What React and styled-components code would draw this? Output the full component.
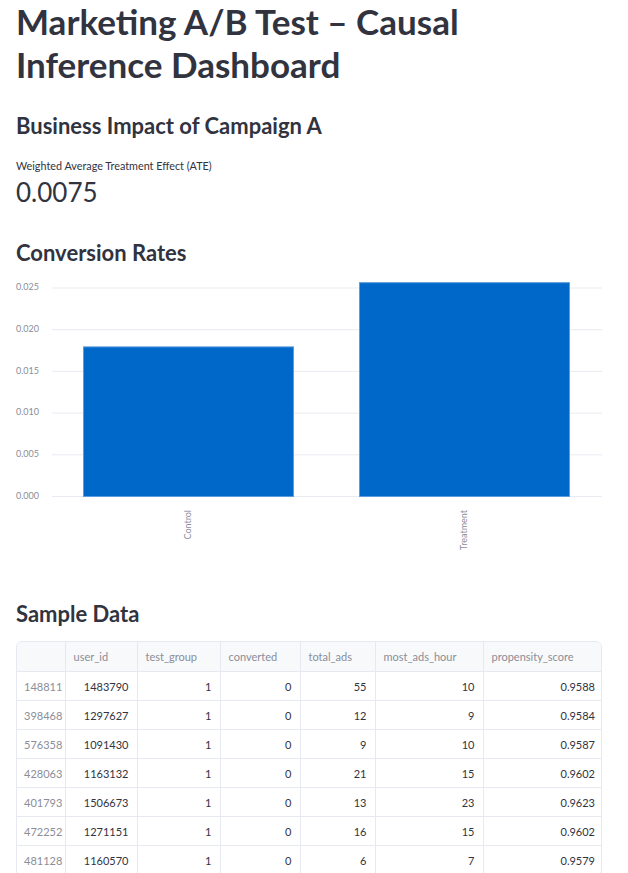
import React from "react";
import styled, { createGlobalStyle } from "styled-components";

const Global = createGlobalStyle`
  html, body { margin: 0; padding: 0; background: #ffffff; }
  body { font-family: Lato, "Noto Sans", sans-serif; color: #31333f; }
`;

const Page = styled.main`
  width: 586px;
  padding: 0 26px 40px 16px;
`;

const Title = styled.h1`
  margin: 0;
  max-width: 560px;
  font-size: 35px;
  line-height: 43px;
  font-weight: 700;
  color: #31333f;
`;

const SubHeading = styled.h3`
  margin: ${(p) => p.$top}px 0 0;
  font-size: 22px;
  line-height: 30px;
  font-weight: 700;
  color: #31333f;
`;

const MetricLabel = styled.div`
  margin-top: 17px;
  font-size: 10.8px;
  line-height: 16px;
  color: #31333f;
`;

const MetricValue = styled.div`
  font-size: 26px;
  line-height: 36px;
  font-weight: 400;
  color: #31333f;
`;

const ChartBox = styled.div`
  margin-top: 12px;
  height: 280px;
`;

const TableWrap = styled.div`
  margin-top: 12px;
  border: 1px solid #e6e9ef;
  border-radius: 6px;
  overflow: hidden;
`;

const Grid = styled.table`
  width: 100%;
  border-collapse: collapse;
  table-layout: fixed;
  font-size: 11px;
`;

const HeadCell = styled.th`
  height: 29px;
  padding: 0 8px;
  text-align: left;
  font-weight: 400;
  color: #8b8d98;
  background: #f8f9fb;
  border-left: 1px solid #e6e9ef;
  border-bottom: 1px solid #e6e9ef;
  &:first-child { border-left: none; }
`;

const Cell = styled.td`
  height: 28px;
  padding: 0 8px;
  text-align: ${(p) => (p.$index ? "left" : "right")};
  color: ${(p) => (p.$index ? "#8b8d98" : "#31333f")};
  border-left: 1px solid #e6e9ef;
  border-bottom: 1px solid #e6e9ef;
  &:first-child { border-left: none; padding-left: 7px; }
`;

const AxisText = styled.text`
  font-family: Lato, "Noto Sans", sans-serif;
  font-size: 9px;
  fill: #8b8d98;
`;

const ticks = [0.025, 0.02, 0.015, 0.01, 0.005, 0];
const zeroY = 216.5;
const perUnit = 41.7 / 0.005;

const bars = [
  { label: "Control", value: 0.018, x: 67, w: 211 },
  { label: "Treatment", value: 0.0257, x: 343, w: 211 },
];

function Chart() {
  return (
    <ChartBox>
      <svg width="586" height="280" viewBox="0 0 586 280">
        {ticks.map((t) => {
          const y = zeroY - t * perUnit;
          return (
            <g key={t}>
              <line x1="36" x2="586" y1={y} y2={y} stroke="#e8ebf2" strokeWidth="1" />
              <AxisText x="0" y={y} dominantBaseline="middle">
                {t.toFixed(3)}
              </AxisText>
            </g>
          );
        })}
        {bars.map((b) => {
          const top = zeroY - b.value * perUnit;
          return (
            <g key={b.label}>
              <rect
                x={b.x + 0.5}
                y={top + 0.5}
                width={b.w - 1}
                height={zeroY - top - 0.5}
                fill="#0068c9"
                stroke="#5c9ce0"
                strokeWidth="1"
              />
              <AxisText
                x={b.x + b.w / 2}
                y="230"
                textAnchor="end"
                dominantBaseline="middle"
                transform={`rotate(-90 ${b.x + b.w / 2} 230)`}
              >
                {b.label}
              </AxisText>
            </g>
          );
        })}
      </svg>
    </ChartBox>
  );
}

const columns = [
  { key: "idx", label: "", w: 48 },
  { key: "user_id", label: "user_id", w: 72 },
  { key: "test_group", label: "test_group", w: 83 },
  { key: "converted", label: "converted", w: 80 },
  { key: "total_ads", label: "total_ads", w: 75 },
  { key: "most_ads_hour", label: "most_ads_hour", w: 108 },
  { key: "propensity_score", label: "propensity_score", w: 120 },
];

const rows = [
  ["148811", "1483790", "1", "0", "55", "10", "0.9588"],
  ["398468", "1297627", "1", "0", "12", "9", "0.9584"],
  ["576358", "1091430", "1", "0", "9", "10", "0.9587"],
  ["428063", "1163132", "1", "0", "21", "15", "0.9602"],
  ["401793", "1506673", "1", "0", "13", "23", "0.9623"],
  ["472252", "1271151", "1", "0", "16", "15", "0.9602"],
  ["481128", "1160570", "1", "0", "6", "7", "0.9579"],
];

function DataTable() {
  return (
    <TableWrap>
      <Grid>
        <colgroup>
          {columns.map((c) => (
            <col key={c.key} style={{ width: c.w }} />
          ))}
        </colgroup>
        <thead>
          <tr>
            {columns.map((c) => (
              <HeadCell key={c.key}>{c.label}</HeadCell>
            ))}
          </tr>
        </thead>
        <tbody>
          {rows.map((r) => (
            <tr key={r[0]}>
              {r.map((v, i) => (
                <Cell key={i} $index={i === 0}>
                  {v}
                </Cell>
              ))}
            </tr>
          ))}
        </tbody>
      </Grid>
    </TableWrap>
  );
}

export default function App() {
  return (
    <>
      <Global />
      <Page>
        <Title>Marketing A/B Test – Causal Inference Dashboard</Title>
        <SubHeading $top={25}>Business Impact of Campaign A</SubHeading>
        <MetricLabel>Weighted Average Treatment Effect (ATE)</MetricLabel>
        <MetricValue>0.0075</MetricValue>
        <SubHeading $top={28}>Conversion Rates</SubHeading>
        <Chart />
        <SubHeading $top={39}>Sample Data</SubHeading>
        <DataTable />
      </Page>
    </>
  );
}
